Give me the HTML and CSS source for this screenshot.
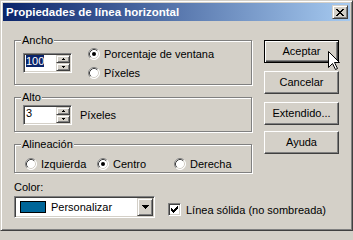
FILE: index.html
```html
<!DOCTYPE html>
<html lang="es">
<head>
<meta charset="utf-8">
<title>Propiedades de línea horizontal</title>
<link rel="stylesheet" href="styles.css">
</head>
<body>
<svg class="defs" width="0" height="0" aria-hidden="true">
  <defs>
    <symbol id="radio" viewBox="0 0 12 12">
      <circle cx="6" cy="6" r="5.5" fill="#fff"/>
      <path d="M2.11 9.89A5.5 5.5 0 0 1 9.89 2.11" fill="none" stroke="#808080"/>
      <path d="M9.89 2.11A5.5 5.5 0 0 1 2.11 9.89" fill="none" stroke="#fff"/>
      <path d="M2.82 9.18A4.5 4.5 0 0 1 9.18 2.82" fill="none" stroke="#404040"/>
      <path d="M9.18 2.82A4.5 4.5 0 0 1 2.82 9.18" fill="none" stroke="#d4d0c8"/>
    </symbol>
    <symbol id="up" viewBox="0 0 3 2"><path d="M1 0h1v1h1v1H0V1h1z" fill="#000"/></symbol>
    <symbol id="down" viewBox="0 0 3 2"><path d="M0 0h3v1H2v1H1V1H0z" fill="#000"/></symbol>
  </defs>
</svg>
<div class="window">
  <div class="caption">
    <span class="caption-title">Propiedades de línea horizontal</span>
    <span class="close-btn"><svg width="8" height="7" viewBox="0 0 8 7" shape-rendering="crispEdges"><path d="M0 0h2v1H0zM6 0h2v1H6zM1 1h2v1H1zM5 1h2v1H5zM2 2h4v1H2zM3 3h2v1H3zM2 4h4v1H2zM1 5h2v1H1zM5 5h2v1H5zM0 6h2v1H0zM6 6h2v1H6z" fill="#000"/></svg></span>
  </div>
  <div class="client">
    <div class="left">
      <div class="group ancho">
        <div class="legend">Ancho</div>
        <div class="ancho-row">
          <div class="spin">
            <div class="spin-text"><span class="sel">100</span></div>
            <div class="spin-btns">
              <span class="spin-btn"><svg width="3" height="2"><use href="#up"/></svg></span>
              <span class="spin-btn"><svg width="3" height="2"><use href="#down"/></svg></span>
            </div>
          </div>
          <div class="radios">
            <div class="radio"><svg width="12" height="12"><use href="#radio"/><circle cx="6" cy="6" r="2" fill="#000"/></svg><span>Porcentaje de ventana</span></div>
            <div class="radio"><svg width="12" height="12"><use href="#radio"/></svg><span>Píxeles</span></div>
          </div>
        </div>
      </div>
      <div class="group alto">
        <div class="legend">Alto</div>
        <div class="alto-row">
          <div class="spin">
            <div class="spin-text"><span>3</span></div>
            <div class="spin-btns">
              <span class="spin-btn"><svg width="3" height="2"><use href="#up"/></svg></span>
              <span class="spin-btn"><svg width="3" height="2"><use href="#down"/></svg></span>
            </div>
          </div>
          <span class="unit">Píxeles</span>
        </div>
      </div>
      <div class="group alin">
        <div class="legend">Alineación</div>
        <div class="alin-row">
          <div class="radio"><svg width="12" height="12"><use href="#radio"/></svg><span>Izquierda</span></div>
          <div class="radio"><svg width="12" height="12"><use href="#radio"/><circle cx="6" cy="6" r="2" fill="#000"/></svg><span>Centro</span></div>
          <div class="radio"><svg width="12" height="12"><use href="#radio"/></svg><span>Derecha</span></div>
        </div>
      </div>
      <div class="color-label">Color:</div>
      <div class="color-row">
        <div class="combo">
          <div class="combo-value"><span class="swatch"></span><span>Personalizar</span></div>
          <span class="combo-btn"><svg width="7" height="4" viewBox="0 0 7 4" shape-rendering="crispEdges"><path d="M0 0h7v1H6v1H5v1H4v1H3V3H2V2H1V1H0z" fill="#000"/></svg></span>
        </div>
        <div class="check">
          <span class="checkbox"><svg width="7" height="7" viewBox="0 0 7 7" shape-rendering="crispEdges"><path d="M6 0h1v1H6zM5 1h2v1H5zM0 2h1v1H0zM4 2h3v1H4zM0 3h2v1H0zM3 3h3v1H3zM0 4h5v1H0zM1 5h3v1H1zM2 6h1v1H2z" fill="#000"/></svg></span>
          <span>Línea sólida (no sombreada)</span>
        </div>
      </div>
    </div>
    <div class="buttons">
      <div class="btn btn-default">Aceptar</div>
      <div class="btn">Cancelar</div>
      <div class="btn">Extendido...</div>
      <div class="btn btn-help">Ayuda</div>
    </div>
  </div>
  <svg class="cursor" width="13" height="20" viewBox="0 0 13 20"><path d="M0.5 0.5V16.5L4.5 12.5L7.5 18.5L9.5 17.5L6.5 11.5H11.5Z" fill="#fff" stroke="#000" stroke-linejoin="miter"/></svg>
</div>
</body>
</html>
```
FILE: styles.css
```css
html, body {
  margin: 0;
  padding: 0;
}
body {
  background: #d4d0c8;
  font-family: "Liberation Sans", Arial, sans-serif;
  font-size: 11px;
  color: #000;
}
.defs {
  position: absolute;
  width: 0;
  height: 0;
  overflow: hidden;
}
.window {
  position: relative;
  width: 353px;
  height: 231px;
  box-sizing: border-box;
  background: #d4d0c8;
  border: 1px solid;
  border-color: #d4d0c8 #404040 #404040 #d4d0c8;
  box-shadow: inset 1px 1px #fff, inset -1px -1px #808080;
  padding: 2px;
}
.caption {
  height: 18px;
  display: flex;
  align-items: center;
  justify-content: space-between;
  padding: 0 2px 0 3px;
  background: linear-gradient(to right, #0a246a, #a6caf0);
}
.caption-title {
  color: #fff;
  font-weight: bold;
  font-size: 11.5px;
  line-height: 18px;
  white-space: nowrap;
}
.close-btn,
.spin-btn,
.combo-btn {
  box-sizing: border-box;
  display: flex;
  align-items: center;
  justify-content: center;
  background: #d4d0c8;
  border: 1px solid;
  border-color: #d4d0c8 #404040 #404040 #d4d0c8;
  box-shadow: inset 1px 1px #fff, inset -1px -1px #808080;
}
.close-btn {
  width: 16px;
  height: 14px;
}
.client {
  display: flex;
  gap: 12px;
  padding: 0 11px;
}
.left {
  width: 238px;
  flex: none;
}
.group {
  box-sizing: border-box;
  border: 1px solid #808080;
  box-shadow: inset 1px 1px #fff, 1px 1px #fff;
}
.legend {
  width: fit-content;
  height: 13px;
  line-height: 13px;
  margin: -7px 0 0 6px;
  padding: 0 1px;
  background: #d4d0c8;
}
.ancho {
  margin-top: 19px;
  height: 45px;
}
.ancho-row {
  display: flex;
  align-items: flex-start;
  padding-left: 8px;
}
.ancho-row .spin {
  margin-top: 6px;
}
.spin {
  box-sizing: border-box;
  flex: none;
  width: 49px;
  height: 20px;
  display: flex;
  padding: 1px;
  background: #fff;
  border: 1px solid;
  border-color: #808080 #fff #fff #808080;
  box-shadow: inset 1px 1px #404040, inset -1px -1px #d4d0c8;
}
.spin-text {
  flex: 1;
  padding-left: 1px;
  line-height: 13px;
  overflow: hidden;
}
.sel {
  background: #0a246a;
  color: #fff;
}
.spin-btns {
  width: 14px;
  display: flex;
  flex-direction: column;
}
.spin-btn {
  height: 8px;
}
.radios {
  display: flex;
  flex-direction: column;
  gap: 7px;
  margin: 1px 0 0 16px;
}
.radio {
  display: flex;
  align-items: center;
  gap: 4px;
  height: 12px;
  line-height: 12px;
  white-space: nowrap;
}
.radio svg {
  flex: none;
}
.alto {
  margin-top: 12px;
  height: 35px;
}
.alto-row {
  display: flex;
  align-items: center;
  padding-left: 8px;
  margin-top: 1px;
}
.unit {
  margin-left: 8px;
}
.alin {
  margin-top: 12px;
  height: 29px;
}
.alin-row {
  display: grid;
  grid-template-columns: 72px 77px auto;
  padding-left: 10px;
  margin-top: 7px;
}
.color-label {
  margin-top: 8px;
  line-height: 13px;
}
.color-row {
  margin-top: 2px;
  display: flex;
  align-items: flex-start;
}
.combo {
  box-sizing: border-box;
  flex: none;
  width: 141px;
  height: 22px;
  display: flex;
  padding: 1px;
  background: #fff;
  border: 1px solid;
  border-color: #808080 #fff #fff #808080;
  box-shadow: inset 1px 1px #404040, inset -1px -1px #d4d0c8;
}
.combo-value {
  flex: 1;
  display: flex;
  align-items: center;
  gap: 5px;
  padding-left: 4px;
  line-height: 13px;
  white-space: nowrap;
}
.swatch {
  box-sizing: border-box;
  flex: none;
  width: 26px;
  height: 12px;
  border: 1px solid #000;
  background: #006699;
}
.combo-btn {
  flex: none;
  width: 16px;
  height: 18px;
}
.check {
  flex: none;
  display: flex;
  align-items: center;
  gap: 5px;
  margin: 7px 0 0 13px;
  white-space: nowrap;
}
.checkbox {
  box-sizing: border-box;
  flex: none;
  width: 13px;
  height: 13px;
  display: flex;
  align-items: center;
  justify-content: center;
  background: #fff;
  border: 1px solid;
  border-color: #808080 #fff #fff #808080;
  box-shadow: inset 1px 1px #404040, inset -1px -1px #d4d0c8;
}
.buttons {
  width: 75px;
  flex: none;
  display: flex;
  flex-direction: column;
  padding-top: 19px;
}
.btn {
  box-sizing: border-box;
  height: 23px;
  line-height: 21px;
  text-align: center;
  border: 1px solid;
  border-color: #fff #404040 #404040 #fff;
  box-shadow: inset -1px -1px #808080;
}
.btn + .btn {
  margin-top: 8px;
}
.btn.btn-help {
  margin-top: 6px;
}
.btn-default {
  border-color: #000;
  box-shadow: inset 1px 1px #fff, inset -1px -1px #404040, inset -2px -2px #808080;
}
.cursor {
  position: absolute;
  left: 327px;
  top: 50px;
}
```
